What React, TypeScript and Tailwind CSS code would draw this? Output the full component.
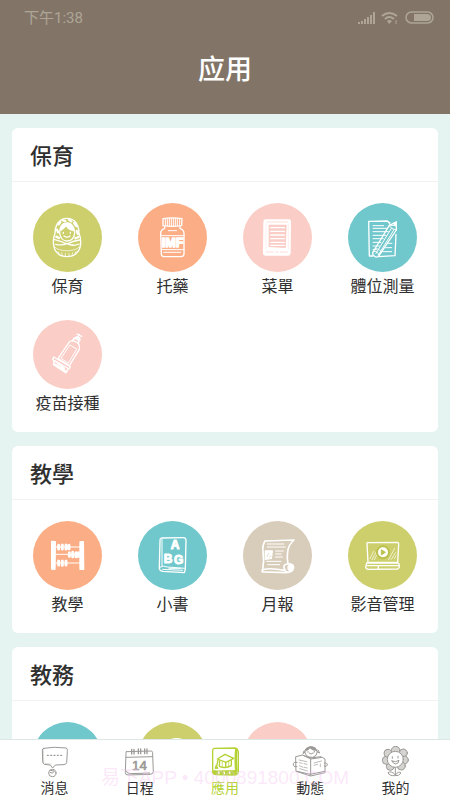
import type { ReactNode } from "react";
import clsx from "clsx";

type AppItem = {
  label: string;
  color: string;
  icon: ReactNode;
};

type Section = {
  title: string;
  items: AppItem[];
};

const OLIVE = "bg-[#cdcf6d]";
const ORANGE = "bg-[#fbad85]";
const PINK = "bg-[#facdc6]";
const TEAL = "bg-[#70c7cc]";
const SAND = "bg-[#d8ccba]";

const DollIcon = () => (
  <>
    <path d="M102 46C76 46 66 70 66 91C58 110 60 137 72 149C86 165 118 165 132 149C145 137 146 110 138 91C138 69 128 46 102 46Z" />
    <path d="M102 60C86 60 79 75 80 91C82 106 92 114 102 114C114 114 124 105 125 91C125 75 117 60 102 60Z" />
    <path d="M83 82C90 78 96 74 99 67C105 77 113 81 122 83L118 70L103 61L88 68Z" fill="currentColor" />
    <path d="M77 64L82 57M90 52L97 54M108 50L115 55M123 60L130 69M72 80L75 88M131 84L135 93M70 101L78 105M127 106L136 102" strokeWidth="7" />
    <path d="M93 99Q102 106 111 99M91 88V91M112 88V91" />
    <path d="M65 110C78 113 91 118 102 123C112 118 128 113 140 111M68 124C80 127 91 127 102 121C113 128 126 128 138 123" />
    <path d="M65 132C78 147 125 148 139 132M75 146L79 153M86 149L88 158M97 151V160M108 151V160M119 149L117 157M129 145L126 152" strokeWidth="2" />
  </>
);

const MedicineIcon = () => (
  <>
    <path d="M75 47Q103 42 132 47L131 68Q103 72 75 68Z" />
    <path d="M82 48V67M88 47V68M94 46V68M100 46V68M106 46V68M112 46V68M118 46V68M125 47V67" strokeWidth="3" />
    <path d="M80 71L80 76Q67 81 68 93L70 154Q72 162 82 161H127Q137 162 138 153V92Q138 80 126 77L126 71" />
    <path d="M69 98H138M70 140H138M77 148H128M91 83H116" strokeWidth="3" />
    <text
      x="71"
      y="133"
      fill="currentColor"
      stroke="currentColor"
      strokeWidth="4"
      className="font-['Liberation_Sans',sans-serif] text-[38px] font-bold"
    >
      IMF
    </text>
  </>
);

const MenuIcon = () => (
  <>
    <path
      fillRule="evenodd"
      d="M67 49H138Q145 50 144 58L143 151Q142 159 134 158H68Q60 158 60 150L61 57Q61 49 67 49ZM77 65L77 132L128 135L131 65Z"
      fill="currentColor"
      stroke="none"
    />
    <path d="M83 74H124M83 85H124M83 96H124M83 107H124M83 118H124M83 127H124" strokeWidth="4" />
    <path d="M72 57H133M70 147H91M112 147H133M98 147H105" stroke="#facdc6" strokeWidth="2" />
    <path d="M69 63V137M136 63V137" stroke="#facdc6" strokeWidth="1" />
  </>
);

const NoteIcon = () => (
  <>
    <path d="M117 54L62 55L64 159H75M91 161L141 158L144 94M117 54L126 60" />
    <path d="M75 68H107M75 76H117M75 86H121M75 97H114M75 107H106M75 118H99M75 129H94M75 140H85M121 121H132M113 134H131M104 146H131" strokeWidth="3" />
    <path d="M124 67L145 57L145 81L93 158Q84 168 75 155Q72 150 77 144Z" />
    <path d="M124 68L132 77L145 81M131 75L84 151M138 80L91 156M77 145Q89 145 94 156M83 137Q96 137 100 148" strokeWidth="3" />
    <path d="M145 57L136 61L145 70Z" fill="currentColor" />
    <path d="M119 54L127 67L144 67" strokeWidth="3" />
  </>
);

const VaccineIcon = () => (
  <>
    <path d="M108 67L75 116L109 137L139 88Q142 72 129 66Q114 59 108 67Z" />
    <path d="M110 76L84 115L106 129L131 88Z" strokeWidth="3" />
    <path d="M119 62L124 54L138 61L136 70M127 55L132 50L140 54L138 60" strokeWidth="5" />
    <path d="M135 50L139 43M132 42L146 49M129 53L142 60" strokeWidth="4" />
    <path d="M62 111L112 140L108 147L59 119Z" />
    <path d="M63 124L62 134L98 158L104 150M68 124L94 145M67 133L96 151M78 130L73 139M89 137L84 146" strokeWidth="5" />
  </>
);

const AbacusIcon = () => (
  <>
    <path d="M56 61L67 62L66 145L56 144ZM141 63L151 62L152 145L141 145Z" fill="currentColor" />
    <path d="M67 78H141M67 100H141M67 126H141" strokeWidth="3" />
    <path d="M77 73V84M88 72V84M99 72V84M108 73V83M109 95V106M119 94V107M129 95V107M136 95V106M77 120V132M88 120V133M99 120V132" strokeWidth="9" />
  </>
);

const AbcBookIcon = () => (
  <>
    <path d="M70 51L135 50Q145 50 144 60L142 145L139 155L75 151Q62 149 64 137L66 60Q65 53 70 51Z" />
    <path d="M72 55L72 136M65 139Q76 132 88 138L141 142M74 145L134 148M93 142H129" strokeWidth="3" />
    <g fill="currentColor" stroke="currentColor" strokeWidth="3" className="font-['Liberation_Sans',sans-serif] text-[36px] font-bold">
      <text x="98" y="85">A</text>
      <text x="77" y="127">B</text>
      <text x="108" y="128">G</text>
    </g>
  </>
);

const ReportIcon = () => (
  <>
    <path d="M66 60L153 57Q136 72 134 91Q131 112 135 128M66 60Q58 73 60 91Q64 120 59 146Q55 153 61 153L132 155" strokeWidth="5" />
    <path d="M58 147Q77 139 125 148Q134 158 145 151Q156 142 149 132Q139 125 126 131Q119 137 126 146" strokeWidth="5" />
    <path d="M139 130Q129 142 142 151Q153 145 148 134Z" fill="currentColor" />
    <path d="M73 69H123M73 78H127M98 90H121M98 99H115M97 108H118M71 121H114M74 131H110" strokeWidth="3" />
    <path d="M67 90H88L85 112L67 115Z" fill="currentColor" />
    <path d="M77 97L72 107M84 104L80 109" stroke="#d8ccba" strokeWidth="2" />
  </>
);

const VideoIcon = () => (
  <>
    <path d="M60 65L149 64Q153 65 152 70L149 124H60L57 69Q56 64 60 65Z" />
    <path d="M56 127L53 138Q54 145 62 145L149 144Q156 140 154 132L151 126H56ZM57 134H151M91 135V142" strokeWidth="4" />
    <path d="M66 113L77 91M72 116L84 94M79 116L87 101M122 116L140 82M130 115L143 95M139 113L144 104" strokeWidth="2" />
    <circle cx="105" cy="94" r="18" stroke="#bcc04c" strokeWidth="6" />
    <circle cx="105" cy="94" r="15" fill="currentColor" stroke="none" />
    <path d="M101 87L112 94L101 101Z" fill="#bcc04c" stroke="#bcc04c" strokeWidth="3" />
  </>
);

const FormIcon = () => (
  <path d="M68 63H140V148H68ZM80 80H128M80 98H128M80 116H112" />
);

const ClockIcon = () => (
  <>
    <circle cx="116" cy="98" r="48" />
    <path d="M116 72V100L134 112" />
  </>
);

const PeopleIcon = () => (
  <>
    <circle cx="104" cy="80" r="22" />
    <path d="M66 148Q68 108 104 108Q140 108 142 148Z" />
  </>
);

const sections: Section[] = [
  {
    title: "保育",
    items: [
      { label: "保育", color: OLIVE, icon: <DollIcon /> },
      { label: "托藥", color: ORANGE, icon: <MedicineIcon /> },
      { label: "菜單", color: PINK, icon: <MenuIcon /> },
      { label: "體位測量", color: TEAL, icon: <NoteIcon /> },
      { label: "疫苗接種", color: PINK, icon: <VaccineIcon /> },
    ],
  },
  {
    title: "教學",
    items: [
      { label: "教學", color: ORANGE, icon: <AbacusIcon /> },
      { label: "小書", color: TEAL, icon: <AbcBookIcon /> },
      { label: "月報", color: SAND, icon: <ReportIcon /> },
      { label: "影音管理", color: OLIVE, icon: <VideoIcon /> },
    ],
  },
  {
    title: "教務",
    items: [
      { label: "請假", color: TEAL, icon: <FormIcon /> },
      { label: "考勤", color: OLIVE, icon: <ClockIcon /> },
      { label: "班級", color: PINK, icon: <PeopleIcon /> },
    ],
  },
];

const tabs = [
  {
    label: "消息",
    icon: (
      <>
        <path d="M20 7Q50 1 88 6Q92 8 91 17L89 50Q88 56 78 56L55 57L47 66L40 57L22 55Q17 53 17 45L16 12Q16 8 20 7Z" />
        <path d="M19 10L20 50M24 52L42 54" strokeWidth="1" />
        <path d="M31 28H34M41 28H44M51 28H54M61 28H64M71 28H74" strokeWidth="4" />
        <circle cx="46" cy="81" r="11" />
        <path d="M40 80Q46 84 52 77M41 73L50 75" />
      </>
    ),
  },
  {
    label: "日程",
    icon: (
      <>
        <path d="M13 17L89 15Q93 17 92 27L94 77Q93 85 84 85L18 87Q9 87 10 79L12 23Q10 18 13 17Z" />
        <path d="M13 34L91 32M13 75Q15 83 24 83L83 81" />
        <path d="M29 10V24M36 10V24M49 9V23M56 9V23M68 9V23M75 9V23" strokeWidth="4" />
        <text
          x="30"
          y="73"
          fill="currentColor"
          strokeWidth="2"
          className="font-['Liberation_Sans',sans-serif] text-[40px]"
        >
          14
        </text>
      </>
    ),
  },
  {
    label: "應用",
    active: true,
    icon: (
      <>
        <path d="M21 7L84 6Q94 9 94 20V77Q92 87 82 87L26 86Q15 84 17 75V15Q17 8 21 7Z" strokeWidth="4" />
        <path d="M88 10Q85 40 88 75" strokeWidth="8" />
        <path d="M18 76Q21 71 28 75L86 74L89 85H27Q18 84 18 76Z" fill="currentColor" />
        <path d="M35 78L36 83M51 78L53 83M67 78L69 83" stroke="white" strokeWidth="4" />
        <path d="M31 39L54 25L80 37L57 49Z" strokeWidth="4" />
        <path d="M38 45L37 61Q55 69 73 59L73 43M33 42L29 60M56 50V62" strokeWidth="4" />
        <path d="M46 49V60M65 47V59" strokeWidth="2" />
        <path d="M27 59L24 67L32 67Z" fill="currentColor" />
      </>
    ),
  },
  {
    label: "動態",
    icon: (
      <>
        <path d="M38 19Q38 5 54 3Q70 0 76 17Q75 31 62 34L51 33Q41 30 38 19Z" />
        <path d="M40 16Q48 15 54 7Q62 15 74 14L70 5L55 1L43 7Z" fill="currentColor" strokeWidth="1" />
        <path d="M39 18L33 23L36 15M75 17L83 21L78 12M52 22Q57 27 64 21M48 17V19M67 16V18" />
        <path d="M12 32L32 27L56 39L91 34L99 39L99 80L56 90L13 76Z" />
        <path d="M56 39L56 88M33 28L55 36L87 32M15 76L55 85L98 76" />
        <path d="M21 42L44 47M22 50L30 52M36 53L45 55M22 59L33 64M23 68L46 75M37 64L46 66M66 51L89 45M66 58L77 55M85 54V62" strokeWidth="2" />
        <path d="M15 49Q3 46 4 57Q6 65 15 62M97 51Q107 50 106 57Q104 64 97 60" />
      </>
    ),
  },
  {
    label: "我的",
    icon: (
      <>
        <g fill="#d6d4d0">
          <circle cx="56" cy="14" r="13" />
          <circle cx="79" cy="21" r="12" />
          <circle cx="82" cy="42" r="12" />
          <circle cx="73" cy="60" r="12" />
          <circle cx="40" cy="61" r="12" />
          <circle cx="28" cy="43" r="12" />
          <circle cx="33" cy="22" r="12" />
        </g>
        <circle cx="55" cy="40" r="24" fill="white" />
        <path d="M46 32V37M63 31V36M45 45Q56 50 66 43Q64 54 56 54Q48 53 45 45ZM55 65V86" />
        <path d="M54 86Q43 73 33 80Q37 90 53 89Q66 91 72 81Q64 74 56 86" />
      </>
    ),
  },
];

const StatusBar = () => (
  <div className="flex h-8 items-center justify-between pt-1 pr-4 pl-6 text-[#aea597]">
    <span className="font-[Roboto,'Noto_Sans_CJK_TC',sans-serif] text-[15px] leading-5">
      下午1:38
    </span>
    <svg viewBox="0 0 78 16" className="h-4 w-[78px]" fill="none" stroke="currentColor">
      <path d="M3 12V14M6 11V14M9 9V14M12 7V14M15 5V14M18 2V14" strokeWidth="2" />
      <path d="M26 6Q33 0 41 6M29 9Q33 5 38 9" strokeWidth="2" />
      <path d="M31 11Q33 9 36 11L33 14Z" fill="currentColor" stroke="none" />
      <path d="M40 10V14" />
      <rect x="50" y="2" width="27" height="11" rx="5.5" strokeWidth="1.5" />
      <path d="M58 4H71Q75 4 75 7.5T71 11H58Z" fill="currentColor" stroke="none" />
    </svg>
  </div>
);

const AppButton = ({ label, color, icon }: AppItem) => (
  <button type="button" className="flex flex-col items-center">
    <span className={clsx("size-[69px] rounded-full text-white", color)}>
      <svg
        viewBox="0 0 207 207"
        className="size-full"
        fill="none"
        stroke="currentColor"
        strokeWidth="4"
        strokeLinecap="round"
        strokeLinejoin="round"
        aria-hidden="true"
      >
        {icon}
      </svg>
    </span>
    <span className="mt-px text-base leading-6 whitespace-nowrap text-[#303030]">{label}</span>
  </button>
);

const App = () => {
  return (
    <div
      lang="zh-Hant"
      className="flex h-dvh flex-col bg-[#e5f4f1] font-['Noto_Sans_CJK_TC','Liberation_Sans',sans-serif]"
    >
      <header className="h-[114px] shrink-0 bg-[#827568]">
        <StatusBar />
        <h1
          lang="zh-Hans"
          className="mt-4 text-center font-['Noto_Sans_CJK_SC',sans-serif] text-[27px] leading-10 font-medium text-white"
        >
          应用
        </h1>
      </header>

      <main className="min-h-0 flex-1 space-y-3.5 overflow-y-auto px-3 py-3.5 [scrollbar-width:none]">
        {sections.map((section) => (
          <section key={section.title} className="rounded-md bg-white">
            <h2 className="border-b border-[#f1f3f3] px-[18px] pt-0.5 pb-[3px] text-[22px] leading-12 font-medium text-[#303030]">
              {section.title}
            </h2>
            <div className="grid grid-cols-4 gap-y-[23px] px-[3px] pt-[21px] pb-[18px]">
              {section.items.map((item) => (
                <AppButton key={item.label} {...item} />
              ))}
            </div>
          </section>
        ))}
      </main>

      <nav className="relative grid h-[61px] shrink-0 grid-cols-5 border-t border-[#dbe8e5] bg-white px-3">
        {tabs.map((tab) => (
          <button
            key={tab.label}
            type="button"
            aria-current={tab.active ? "page" : undefined}
            className="flex flex-col items-center pt-1.5"
          >
            <svg
              viewBox="0 0 108 96"
              className={clsx("h-8 w-9", tab.active ? "text-[#b4d234]" : "text-[#9b9996]")}
              fill="none"
              stroke="currentColor"
              strokeWidth="3"
              strokeLinecap="round"
              strokeLinejoin="round"
              aria-hidden="true"
            >
              {tab.icon}
            </svg>
            <span className={clsx("text-sm leading-[18px]", tab.active ? "text-[#b4d234]" : "text-[#303030]")}>
              {tab.label}
            </span>
          </button>
        ))}
        <p className="pointer-events-none absolute inset-x-0 top-6 text-center font-['Liberation_Sans','Noto_Sans_CJK_SC',sans-serif] text-[19px] leading-7 whitespace-nowrap text-[#f5c6f0]/40">
          易下APP • 4000891800.COM
        </p>
      </nav>
    </div>
  );
};

export default App;
